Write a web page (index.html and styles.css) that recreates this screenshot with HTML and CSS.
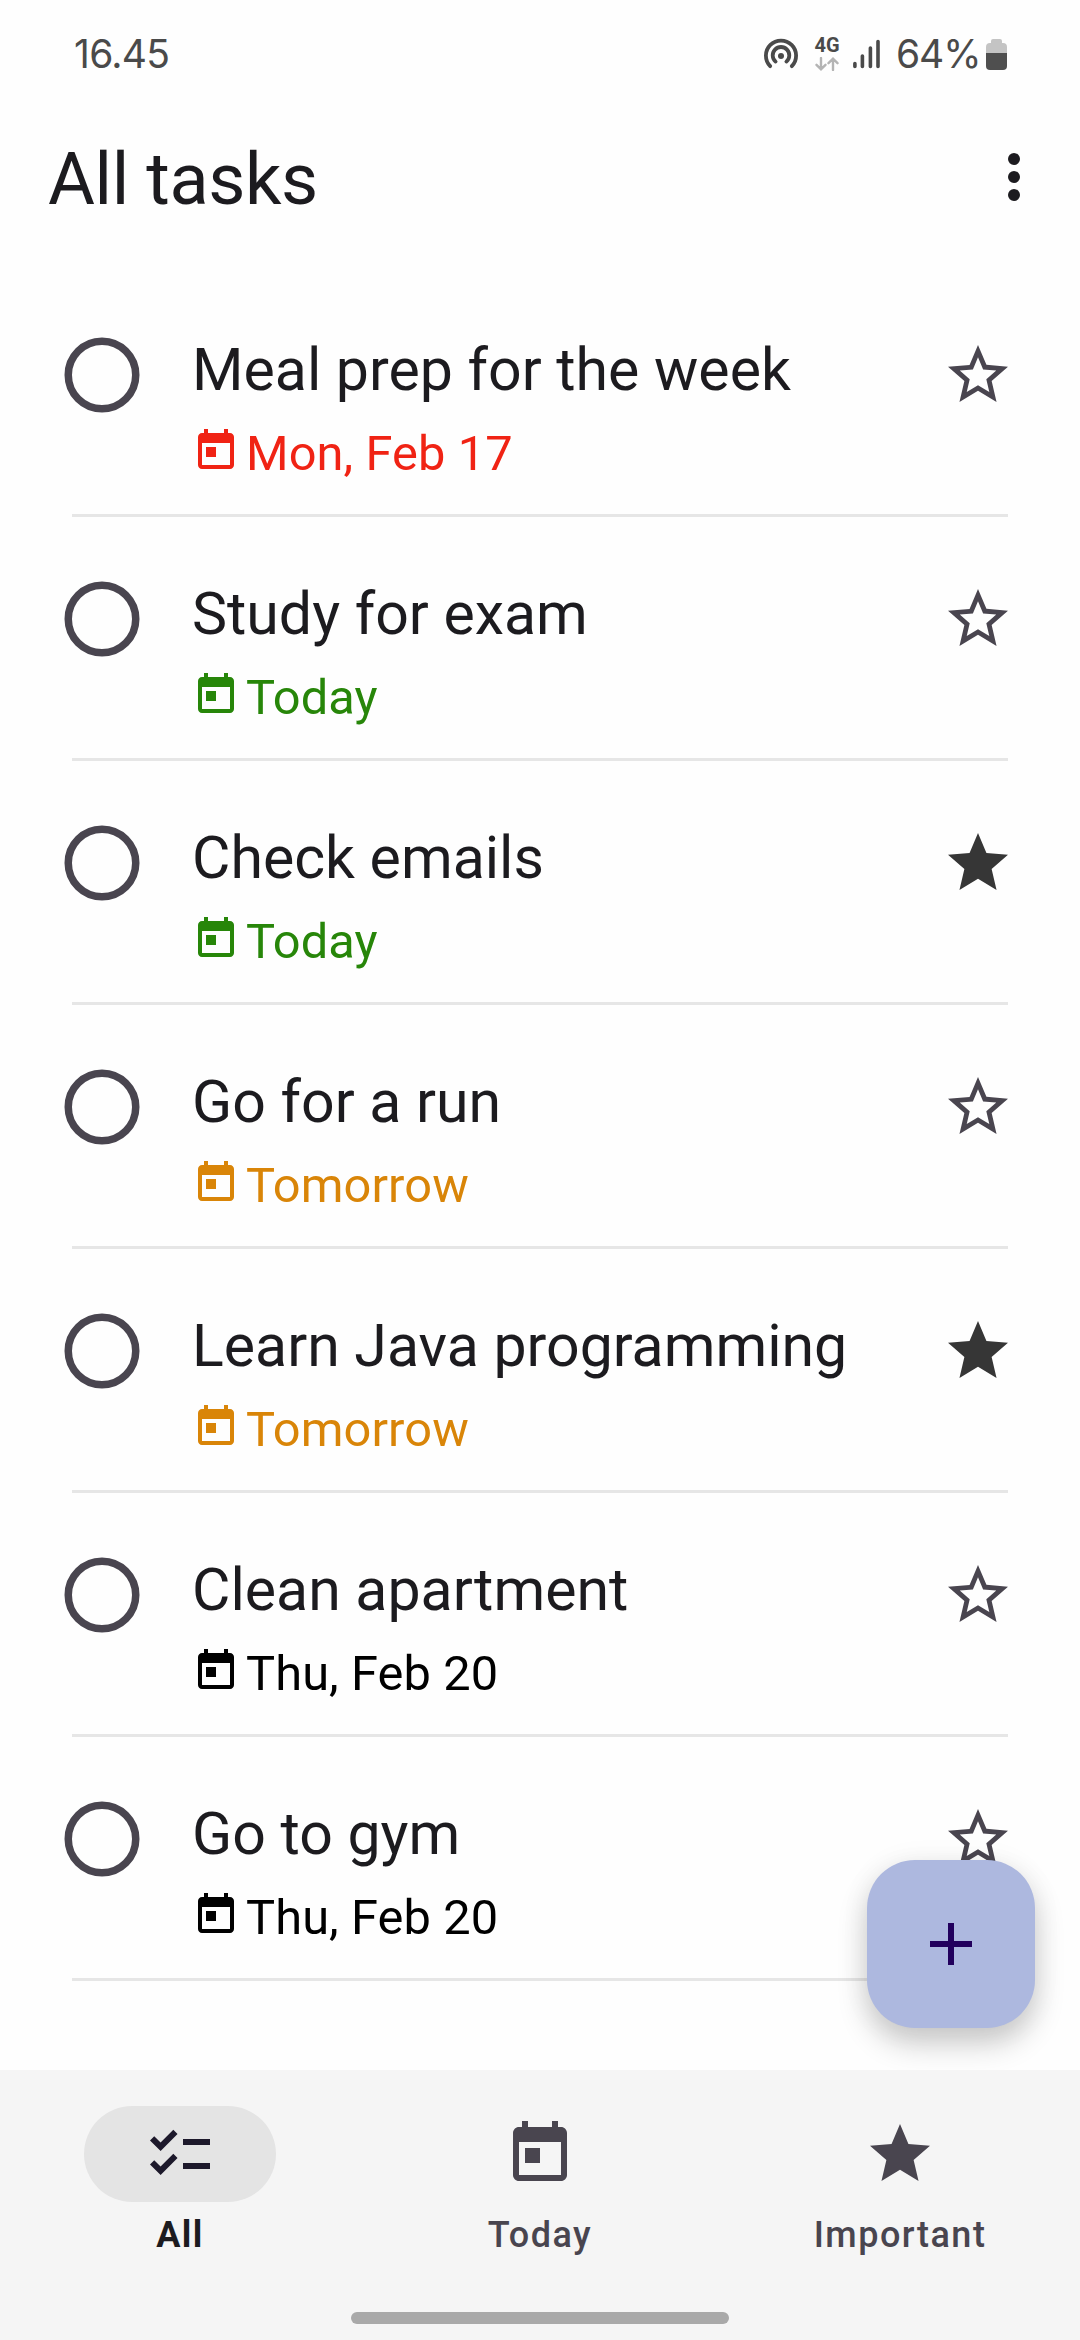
FILE: index.html
```html
<!DOCTYPE html>
<html lang="en">
<head>
<meta charset="utf-8">
<title>All tasks</title>
<link rel="stylesheet" href="styles.css">
</head>
<body>
<svg class="sprite" aria-hidden="true">
  <symbol id="ring" viewBox="0 0 24 24"><circle cx="12" cy="12" r="9" fill="none" stroke="currentColor" stroke-width="2"/></symbol>
  <symbol id="star-outline" viewBox="0 0 24 24"><path d="M22 9.24l-7.19-.62L12 2 9.19 8.63 2 9.24l5.46 4.73L5.82 21 12 17.27 18.18 21l-1.63-7.03L22 9.24zM12 15.4l-3.76 2.27 1-4.28-3.32-2.88 4.38-.38L12 6.1l1.71 4.04 4.38.38-3.32 2.88 1 4.28L12 15.4z"/></symbol>
  <symbol id="star" viewBox="0 0 24 24"><path d="M12 17.27L18.18 21l-1.64-7.03L22 9.24l-7.19-.61L12 2 9.19 8.63 2 9.24l5.46 4.73L5.82 21z"/></symbol>
  <symbol id="calendar" viewBox="0 0 24 24"><path d="M19 3h-1V1h-2v2H8V1H6v2H5c-1.11 0-1.99.9-1.99 2L3 19c0 1.1.89 2 2 2h14c1.1 0 2-.9 2-2V5c0-1.1-.9-2-2-2zm0 16H5V8h14v11zM7 10h5v5H7z"/></symbol>
  <symbol id="checklist" viewBox="0 0 24 24"><path d="M22 7h-9v2h9V7zm0 8h-9v2h9v-2zM5.54 11L2 7.46l1.41-1.41 2.12 2.12 4.24-4.24 1.41 1.41L5.54 11zm0 8L2 15.46l1.41-1.41 2.12 2.12 4.24-4.24 1.41 1.41L5.54 19z"/></symbol>
</svg>
<div class="screen">
  <div class="status">
    <span class="clock">16.45</span>
    <div class="indicators">
      <svg class="hotspot" viewBox="0 0 36 32"><g fill="none" stroke="#4a4a4a" stroke-width="3.8" stroke-linecap="round"><path d="M7.2 28.2A15.1 15.1 0 1 1 28.8 28.2"/><path d="M12.6 23.6A8.3 8.3 0 1 1 23.4 23.6"/></g><circle cx="18" cy="18" r="3" fill="#4a4a4a"/></svg>
      <div class="network">
        <span class="network-type">4G</span>
        <svg class="arrows" viewBox="0 0 24 14"><path d="M6 1V12M1.5 7.8L6 12.3L10.5 7.8M18 13V2M13.5 6.2L18 1.7L22.500 6.200" fill="none" stroke="#b4b4b4" stroke-width="2.4" stroke-linecap="round"/></svg>
      </div>
      <svg class="signal" viewBox="0 0 27 30"><path d="M1.900 24.500V27.500M9.400 17V27.500M17.400 9V27.500M25 2.500V27.500" stroke="#4a4a4a" stroke-width="3.600" stroke-linecap="round"/></svg>
      <span class="percent">64%</span>
      <svg class="battery" viewBox="0 0 21 31"><path d="M5 4V2Q5 0 7 0H14Q16 0 16 2V4H17Q21 4 21 8V14H0V8Q0 4 4 4Z" fill="#c4c4c4"/><path d="M0 14H21V27Q21 31 17 31H4Q0 31 0 27Z" fill="#4f4f4f"/></svg>
    </div>
  </div>
  <header class="header">
    <h1 class="heading">All tasks</h1>
    <svg class="icon more" viewBox="0 0 24 24"><circle cx="12" cy="6" r="2"/><circle cx="12" cy="12" r="2"/><circle cx="12" cy="18" r="2"/></svg>
  </header>
  <main class="list">
    <div class="task">
      <svg class="ring"><use href="#ring"/></svg>
      <div class="details"><div class="name">Meal prep for the week</div><div class="due overdue"><svg class="due-icon"><use href="#calendar"/></svg><span>Mon, Feb 17</span></div></div>
      <svg class="icon"><use href="#star-outline"/></svg>
    </div>
    <div class="task">
      <svg class="ring"><use href="#ring"/></svg>
      <div class="details"><div class="name">Study for exam</div><div class="due today"><svg class="due-icon"><use href="#calendar"/></svg><span>Today</span></div></div>
      <svg class="icon"><use href="#star-outline"/></svg>
    </div>
    <div class="task">
      <svg class="ring"><use href="#ring"/></svg>
      <div class="details"><div class="name">Check emails</div><div class="due today"><svg class="due-icon"><use href="#calendar"/></svg><span>Today</span></div></div>
      <svg class="icon starred"><use href="#star"/></svg>
    </div>
    <div class="task">
      <svg class="ring"><use href="#ring"/></svg>
      <div class="details"><div class="name">Go for a run</div><div class="due tomorrow"><svg class="due-icon"><use href="#calendar"/></svg><span>Tomorrow</span></div></div>
      <svg class="icon"><use href="#star-outline"/></svg>
    </div>
    <div class="task">
      <svg class="ring"><use href="#ring"/></svg>
      <div class="details"><div class="name">Learn Java programming</div><div class="due tomorrow"><svg class="due-icon"><use href="#calendar"/></svg><span>Tomorrow</span></div></div>
      <svg class="icon starred"><use href="#star"/></svg>
    </div>
    <div class="task">
      <svg class="ring"><use href="#ring"/></svg>
      <div class="details"><div class="name">Clean apartment</div><div class="due"><svg class="due-icon"><use href="#calendar"/></svg><span>Thu, Feb 20</span></div></div>
      <svg class="icon"><use href="#star-outline"/></svg>
    </div>
    <div class="task">
      <svg class="ring"><use href="#ring"/></svg>
      <div class="details"><div class="name">Go to gym</div><div class="due"><svg class="due-icon"><use href="#calendar"/></svg><span>Thu, Feb 20</span></div></div>
      <svg class="icon"><use href="#star-outline"/></svg>
    </div>
  </main>
  <button class="fab" aria-label="Add task"><svg class="icon plus" viewBox="0 0 24 24"><path d="M19 13h-6v6h-2v-6H5v-2h6V5h2v6h6v2z"/></svg></button>
  <nav class="nav">
    <div class="tabs">
      <div class="tab active"><div class="pill"><svg class="icon"><use href="#checklist"/></svg></div><span>All</span></div>
      <div class="tab"><div class="pill"><svg class="icon"><use href="#calendar"/></svg></div><span>Today</span></div>
      <div class="tab"><div class="pill"><svg class="icon"><use href="#star"/></svg></div><span>Important</span></div>
    </div>
    <div class="gesture"></div>
  </nav>
</div>
</body>
</html>
```
FILE: styles.css
```css
* { box-sizing: border-box; }
body { margin: 0; background: #fefefe; font-family: Roboto, sans-serif; color: #1c1b1f; }
svg { display: block; fill: currentColor; flex: none; }
.sprite { position: absolute; width: 0; height: 0; }
.screen { position: relative; width: 1080px; height: 2340px; display: flex; flex-direction: column; overflow: hidden; }

.status { height: 108px; padding: 0 73px 0 74px; display: flex; align-items: center; justify-content: space-between; font-family: Inter, sans-serif; color: #4a4a4a; }
.clock { font-size: 39px; line-height: 48px; letter-spacing: -0.7px; }
.indicators { display: flex; align-items: center; }
.hotspot { width: 36px; height: 32px; }
.network { width: 26px; margin-left: 15px; display: flex; flex-direction: column; align-items: center; gap: 4px; }
.network-type { font: 700 20px/15px Roboto, sans-serif; }
.arrows { width: 24px; height: 14px; }
.signal { width: 27px; height: 30px; margin-left: 13px; }
.percent { width: 83px; margin-left: 16px; font-size: 39px; line-height: 48px; letter-spacing: -1.1px; white-space: nowrap; }
.battery { width: 21px; height: 31px; margin-left: 7px; }

.header { height: 138px; padding: 0 30px 0 48px; display: flex; align-items: center; justify-content: space-between; }
.heading { margin: 6px 0 0; font-size: 72px; line-height: 84px; font-weight: 400; letter-spacing: -0.4px; }
.icon { width: 72px; height: 72px; }

.list { flex: 1; padding: 27px 72px 0; }
.task { height: 244px; padding: 57px 0 0; display: flex; align-items: flex-start; border-bottom: 3px solid #e6e6e6; color: #49454f; }
.ring { width: 90px; height: 90px; margin-left: -15px; }
.details { flex: 1; margin-left: 45px; padding-top: 5px; }
.name { height: 69px; font-size: 59px; line-height: 69px; color: #1c1b1f; white-space: nowrap; }
.due { margin-top: 21px; height: 57px; display: flex; align-items: flex-start; gap: 6px; font-size: 48.75px; line-height: 57px; letter-spacing: 0.1px; color: #000; }
.due-icon { width: 48px; height: 48px; margin-top: 2px; }
.overdue { color: #f02314; }
.today { color: #278609; }
.tomorrow { color: #d98508; }
.task > .icon { margin: 9px -6px 0 0; }
.starred { color: #363636; }

.fab { position: absolute; left: 867px; top: 1860px; width: 168px; height: 168px; padding: 0; border: 0; border-radius: 48px; background: #adb8df; color: #22005d; display: flex; align-items: center; justify-content: center; box-shadow: 0 16px 30px rgba(0, 0, 0, .2), 0 2px 30px rgba(0, 0, 0, .06); }

.nav { position: relative; height: 270px; padding-top: 36px; background: #f5f5f5; display: flex; flex-direction: column; align-items: center; color: #49454f; }
.tabs { width: 1080px; height: 206px; display: grid; grid-template-columns: repeat(3, 1fr); }
.tab { display: flex; flex-direction: column; align-items: center; gap: 12px; font-size: 36px; line-height: 42px; font-weight: 500; letter-spacing: 1.5px; }
.pill { width: 192px; height: 96px; border-radius: 48px; display: flex; align-items: center; justify-content: center; }
.active { color: #1c1b1f; font-weight: 700; }
.active .pill { background: #e4e4e4; color: #1d192b; }
.gesture { width: 378px; height: 12px; border-radius: 6px; background: #a9a9a9; }
```
